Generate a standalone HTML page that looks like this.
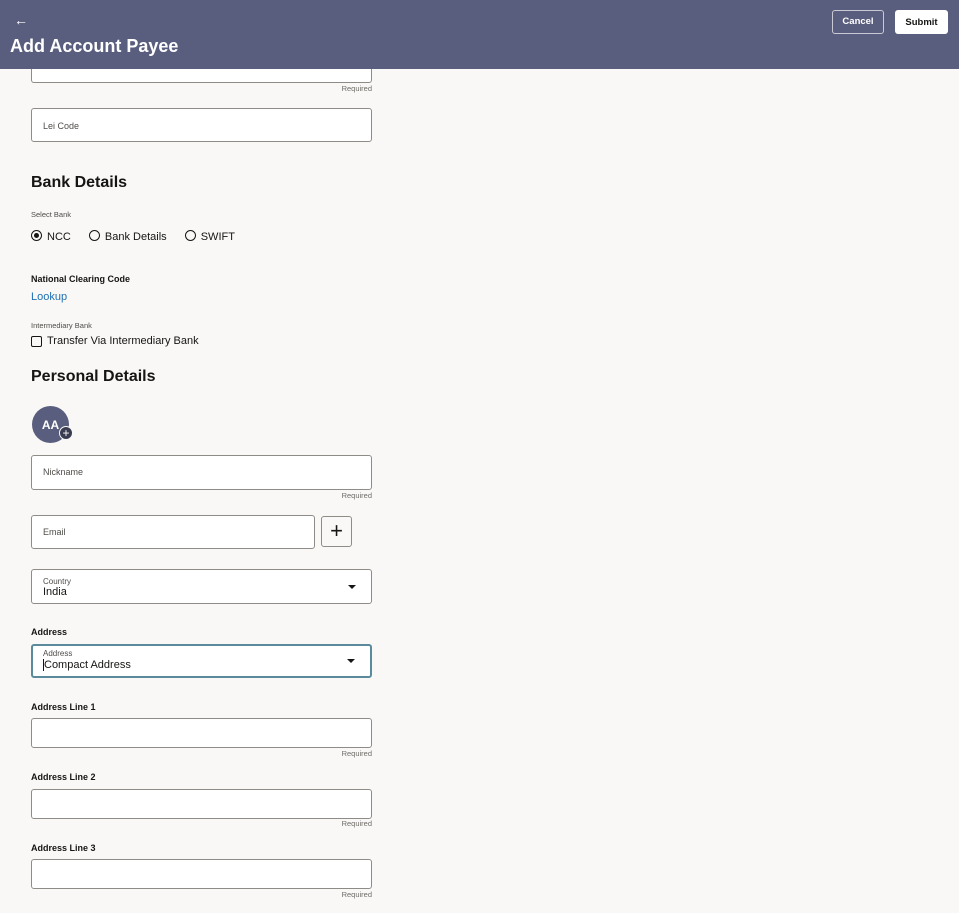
<!DOCTYPE html>
<html><head><style>
*{box-sizing:border-box;margin:0;padding:0}
body{width:959px;height:913px;background:#f9f8f6;font-family:"Liberation Sans",sans-serif;position:relative;overflow:hidden;color:#161513}
.a{position:absolute}
.hdr{left:0;top:0;width:959px;height:69px;background:#5a5e7e}
.box{position:absolute;left:31px;width:341px;background:#fff;border:1px solid #8f8c88;border-radius:3px}
.ph{position:absolute;left:11px;font-size:9px;color:#4f4c49}
.req{position:absolute;right:587px;font-size:7.5px;color:#6f6c69}
.lbl{position:absolute;left:31px;font-size:9px;font-weight:bold}
.h2{position:absolute;left:31px;font-size:16px;font-weight:bold}
.caret{position:absolute;right:15px;width:0;height:0;border-left:4px solid transparent;border-right:4px solid transparent;border-top:4px solid #161513}
.radio{display:inline-block;width:11px;height:11px;border:1px solid #161513;border-radius:50%;vertical-align:-1px;margin-right:5px;position:relative}
</style></head><body>
<div class="a hdr"></div>
<div class="a" style="left:14px;top:12px;color:#fff;font-size:14px">←</div>
<div class="a" style="left:10px;top:36px;color:#fff;font-size:18px;font-weight:bold">Add Account Payee</div>
<div class="a" style="left:832px;top:10px;width:52px;height:24px;border:1px solid #c9cad6;border-radius:3px;color:#fff;font-size:9.5px;font-weight:bold;text-align:center;line-height:22px;display:flex;align-items:center;justify-content:center">Cancel</div>
<div class="a" style="left:895px;top:10px;width:53px;height:24px;background:#fff;border-radius:3px;font-size:9.5px;font-weight:bold;display:flex;align-items:center;justify-content:center">Submit</div>

<div class="box" style="top:60px;height:23px;border-top:none;border-radius:0 0 3px 3px"></div>
<div class="a" style="left:0;top:60px;width:959px;height:9px;background:#5a5e7e"></div>
<div class="req" style="top:84px">Required</div>
<div class="box" style="top:108px;height:34px"><span class="ph" style="top:12px">Lei Code</span></div>

<div class="h2" style="top:174px">Bank Details</div>
<div class="a" style="left:31px;top:210px;font-size:7.5px;color:#4f4c49">Select Bank</div>
<div class="a" style="left:31px;top:230px;font-size:11px">
<span class="radio"><span style="position:absolute;left:2px;top:2px;width:5px;height:5px;border-radius:50%;background:#161513"></span></span>NCC
<span style="margin-left:15px"><span class="radio"></span>Bank Details</span>
<span style="margin-left:15px"><span class="radio"></span>SWIFT</span></div>

<div class="lbl" style="top:274px">National Clearing Code</div>
<div class="a" style="left:31px;top:291px;font-size:11px;color:#1f6fb4">Lookup</div>
<div class="a" style="left:31px;top:321px;font-size:7.5px;color:#4f4c49">Intermediary Bank</div>
<div class="a" style="left:31px;top:336px;width:11px;height:11px;border:1px solid #161513;border-radius:2px"></div>
<div class="a" style="left:47px;top:335px;font-size:11px">Transfer Via Intermediary Bank</div>

<div class="h2" style="top:368px">Personal Details</div>
<div class="a" style="left:32px;top:406px;width:37px;height:37px;border-radius:50%;background:#5a5e7e;color:#fff;font-size:12px;font-weight:bold;text-align:center;line-height:38px">AA</div>
<div class="a" style="left:59px;top:426px;width:14px;height:14px;border-radius:50%;background:#3a3c52;border:1px solid #f9f8f6;color:#fff;font-size:12px;line-height:12px;text-align:center">+</div>

<div class="box" style="top:455px;height:35px"><span class="ph" style="top:11px">Nickname</span></div>
<div class="req" style="top:491px">Required</div>
<div class="box" style="top:515px;height:34px;width:284px"><span class="ph" style="top:11px">Email</span></div>
<div class="a" style="left:321px;top:516px;width:31px;height:31px;border:1px solid #8f8c88;border-radius:3px;font-size:22px;line-height:27px;text-align:center;font-weight:300">+</div>

<div class="box" style="top:569px;height:35px"><span class="ph" style="top:7px;font-size:8px">Country</span><span class="a" style="left:11px;top:16px;font-size:11px">India</span><span class="caret" style="top:15px"></span></div>

<div class="lbl" style="top:627px">Address</div>
<div class="box" style="top:644px;height:34px;border:2px solid #5a8a9c"><span class="ph" style="top:3px;font-size:8px;left:10px">Address</span><span class="a" style="left:10px;top:13px;font-size:11px;border-left:1px solid #161513">Compact Address</span><span class="caret" style="top:13px"></span></div>

<div class="lbl" style="top:702px">Address Line 1</div>
<div class="box" style="top:718px;height:30px"></div>
<div class="req" style="top:749px">Required</div>
<div class="lbl" style="top:772px">Address Line 2</div>
<div class="box" style="top:789px;height:30px"></div>
<div class="req" style="top:819px">Required</div>
<div class="lbl" style="top:843px">Address Line 3</div>
<div class="box" style="top:859px;height:30px"></div>
<div class="req" style="top:890px">Required</div>
</body></html>
